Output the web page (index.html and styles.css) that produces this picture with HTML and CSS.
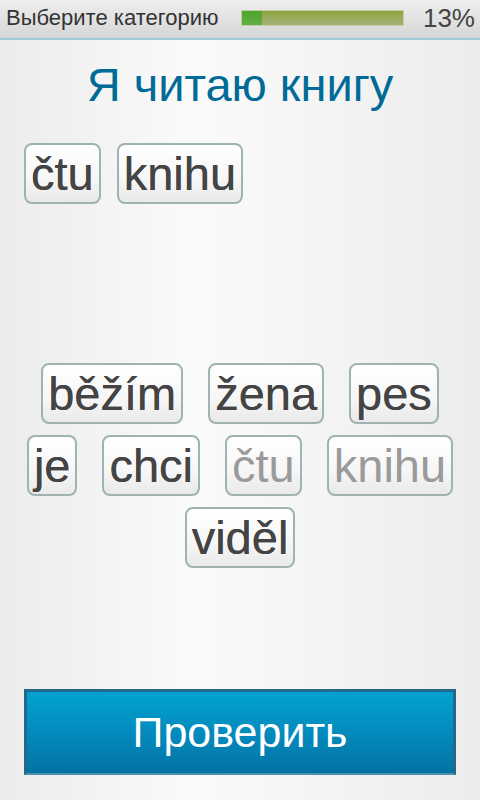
FILE: index.html
```html
<!DOCTYPE html>
<html lang="ru">
<head>
<meta charset="utf-8">
<link rel="stylesheet" href="styles.css">
</head>
<body>
<div class="screen">
  <header class="topbar">
    <span class="category">Выберите категорию</span>
    <div class="progress"><div class="progress-fill" style="width:13%"></div></div>
    <span class="percent">13%</span>
  </header>
  <h1 class="prompt">Я читаю книгу</h1>
  <div class="answer">
    <span class="word">čtu</span>
    <span class="word">knihu</span>
  </div>
  <div class="pool">
    <span class="word">běžím</span>
    <span class="word">žena</span>
    <span class="word">pes</span>
    <span class="word">je</span>
    <span class="word">chci</span>
    <span class="word used">čtu</span>
    <span class="word used">knihu</span>
    <span class="word">viděl</span>
  </div>
  <button class="check">Проверить</button>
</div>
</body>
</html>
```
FILE: styles.css
```css
* { box-sizing: border-box; }
html, body { margin: 0; padding: 0; }
body {
  width: 480px;
  height: 800px;
  overflow: hidden;
  font-family: "Liberation Sans", Arial, sans-serif;
}
.screen {
  height: 800px;
  display: flex;
  flex-direction: column;
  background: linear-gradient(to right, #ececec 0%, #fafafa 40%, #f6f6f6 60%, #ececec 100%);
}
.topbar {
  height: 40px;
  display: flex;
  align-items: center;
  padding: 0 5px 2px 6px;
  background: linear-gradient(to bottom, #eeeeee, #d6d6d6);
  border-bottom: 2px solid #9ecadd;
}
.category {
  font-size: 22px;
  color: #333;
  white-space: nowrap;
}
.progress {
  margin-left: 22px;
  width: 163px;
  height: 16px;
  border: 1px solid #c3cf9e;
  background: linear-gradient(to bottom, #8ea53f, #a3b27a);
}
.progress-fill {
  height: 100%;
  background: linear-gradient(to bottom, #4ea52c, #62ad44);
}
.percent {
  margin-left: auto;
  font-size: 26px;
  color: #444;
}
.prompt {
  margin: 17px 0 0;
  font-weight: normal;
  font-size: 47px;
  line-height: 56px;
  text-align: center;
  color: #006b97;
}
.answer {
  margin-top: 30px;
  height: 220px;
  padding-left: 24px;
  display: flex;
  flex-wrap: wrap;
  align-content: flex-start;
  column-gap: 16px;
}
.pool {
  padding: 0 20px;
  display: flex;
  flex-wrap: wrap;
  justify-content: center;
  column-gap: 25px;
  row-gap: 11px;
}
.word {
  display: inline-block;
  height: 61px;
  padding: 0 5px;
  border: 2px solid #9fb3b2;
  border-radius: 8px;
  background: linear-gradient(to bottom, #ffffff, #f6f6f6 60%, #e9e9e9);
  font-size: 47px;
  line-height: 57px;
  color: #444;
  text-shadow: 0 0 0.4px #444;
}
.word.used { color: #9a9a9a; text-shadow: none; }
.check {
  margin: auto 24px 25px;
  height: 86px;
  border: 3px solid #236a8a;
  border-bottom: 2px solid #4f8fae;
  background: linear-gradient(to bottom, #02a3d1, #0388bb 55%, #0372a2);
  color: #fff;
  font-family: "Liberation Sans", Arial, sans-serif;
  font-size: 43px;
  padding: 0;
}
```
